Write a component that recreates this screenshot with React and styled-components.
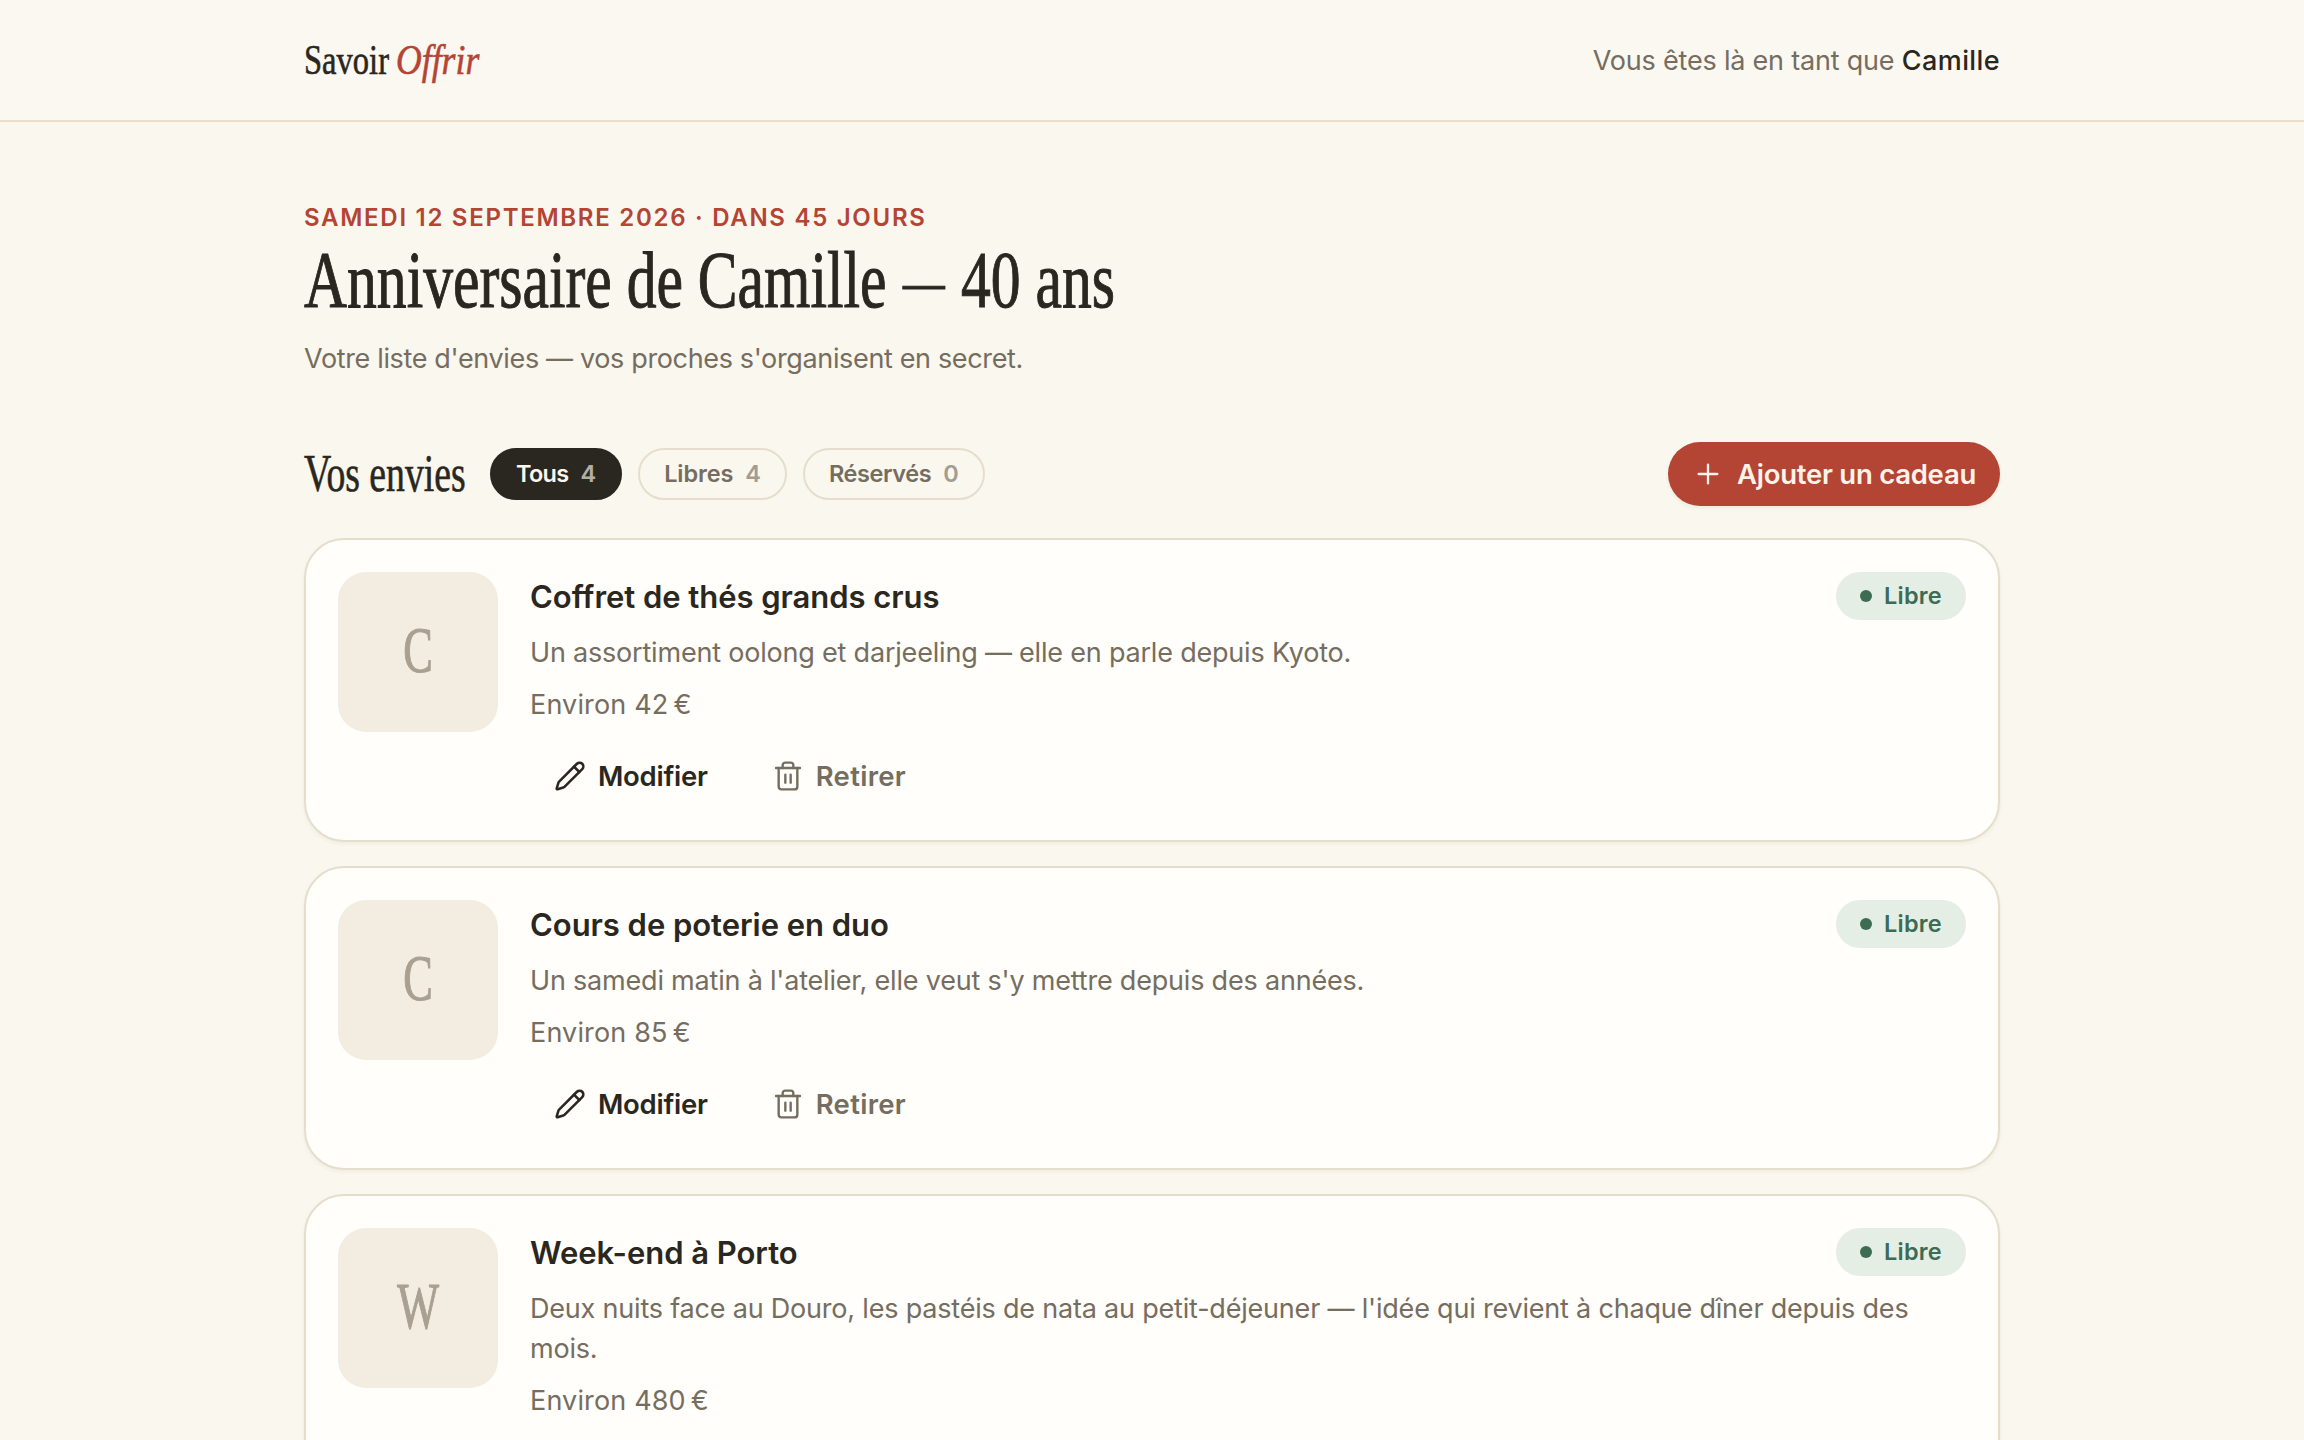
import React from "react";
import styled, { createGlobalStyle, ThemeProvider } from "styled-components";
import { Pencil, Plus, Trash2 } from "lucide-react";

const theme = {
  page: "#faf7ee",
  header: "#fbf8f2",
  card: "#fffefa",
  ink: "#2a2620",
  muted: "#756d60",
  faint: "#a9a091",
  line: "#e6decd",
  headerLine: "#ebdecb",
  tile: "#f3ece1",
  red: "#b44434",
  green: "#3d6b54",
  greenSoft: "#e5eee5",
  sans: 'Inter, "Liberation Sans", sans-serif',
  serif: '"Liberation Serif", serif',
};

const GlobalStyle = createGlobalStyle`
* {
box-sizing: border-box;
}

body {
margin: 0;
background: ${({theme}) => theme.page};
}

h1, h2, h3, p {
margin: 0;
font-weight: 400;
}

button {
margin: 0;
border: 0;
background: none;
font: inherit;
cursor: pointer;
}
`

const Page = styled.div`
height: 100vh;
overflow: hidden;
color: ${({theme}) => theme.ink};
font-family: ${({theme}) => theme.sans};
font-size: 27px;
line-height: 40px;
`

const Header = styled.header`
height: 122px;
border-bottom: 2px solid ${({theme}) => theme.headerLine};
background: ${({theme}) => theme.header};
`

const Container = styled.div`
width: 1696px;
margin: 0 auto;
`

const HeaderRow = styled(Container)`
display: flex;
align-items: center;
justify-content: space-between;
height: 120px;
`

// Serif text squeezed horizontally, the width is the one it takes once squeezed
const Condensed = styled.span`
display: block;
width: ${({$width}) => $width}px;
white-space: nowrap;
transform: scaleX(${({$scale}) => $scale});
transform-origin: left;
-webkit-text-stroke: ${({$stroke}) => $stroke || 0.6}px currentColor;
`

const Dash = styled.span`
position: relative;
top: -6px;
margin: 0 2px;
font-size: 56px;
line-height: 0;
`

const Logo = styled.div`
display: flex;
font-family: ${({theme}) => theme.serif};
font-size: 43px;
line-height: 48px;
`

const LogoAccent = styled(Condensed)`
color: ${({theme}) => theme.red};
font-style: italic;
`

const Identity = styled.p`
padding-top: 2px;
color: ${({theme}) => theme.muted};
letter-spacing: -0.2px;

strong {
color: ${({theme}) => theme.ink};
font-weight: 500;
letter-spacing: 0.4px;
}
`

const Main = styled(Container)`
padding-top: 80px;
`

const EventDate = styled.p`
color: ${({theme}) => theme.red};
font-size: 24px;
font-weight: 600;
line-height: 32px;
letter-spacing: 1.72px;
text-transform: uppercase;
`

const Title = styled.h1`
margin-top: 7px;
font-family: ${({theme}) => theme.serif};
font-size: 80px;
line-height: 78px;
`

const Intro = styled.p`
margin-top: 20px;
color: ${({theme}) => theme.muted};
letter-spacing: -0.35px;
`

const Toolbar = styled.div`
display: flex;
align-items: center;
height: 64px;
margin: 63px 0 32px;
`

const ListTitle = styled.h2`
margin-right: 24px;
padding-bottom: 2px;
font-family: ${({theme}) => theme.serif};
font-size: 53px;
line-height: 60px;
`

const Filters = styled.div`
display: flex;
gap: 16px;
`

const Filter = styled.button`
display: flex;
align-items: center;
gap: 12px;
height: 52px;
padding: 0 24px;
border: 2px solid ${({theme, $active}) => $active ? theme.ink : theme.line};
border-radius: 26px;
background: ${({theme, $active}) => $active ? theme.ink : "transparent"};
color: ${({theme, $active}) => $active ? theme.page : theme.muted};
font-size: 23.5px;
font-weight: 600;
letter-spacing: ${({$tracking}) => $tracking}px;
`

const Count = styled.span`
opacity: .65;
letter-spacing: 0;
`

const AddButton = styled.button`
display: flex;
align-items: center;
gap: 13px;
height: 64px;
margin-left: auto;
padding: 0 24px;
border-radius: 32px;
background: ${({theme}) => theme.red};
box-shadow: 0 2px 4px rgba(60, 40, 20, .06);
color: #fdf3e9;
font-size: 27.5px;
font-weight: 600;
letter-spacing: -0.26px;
`

const List = styled.div`
display: flex;
flex-direction: column;
gap: 24px;
`

const Card = styled.article`
display: flex;
align-items: flex-start;
gap: 32px;
padding: 32px;
border: 2px solid ${({theme}) => theme.line};
border-radius: 40px;
background: ${({theme}) => theme.card};
box-shadow: 0 2px 4px rgba(60, 40, 20, .05);
`

const Tile = styled.div`
display: flex;
flex: none;
align-items: center;
justify-content: center;
width: 160px;
height: 160px;
padding-bottom: 4px;
border-radius: 28px;
background: ${({theme}) => theme.tile};
color: ${({theme}) => theme.faint};
font-family: ${({theme}) => theme.serif};
font-size: 66px;

span {
transform: scaleX(.67);
-webkit-text-stroke: 1.2px currentColor;
}
`

const CardBody = styled.div`
flex: 1;
`

const CardHead = styled.div`
display: flex;
align-items: flex-start;
justify-content: space-between;
height: 49px;
`

const GiftName = styled.h3`
font-size: 31px;
font-weight: 600;
line-height: 50px;
letter-spacing: -0.04px;
`

const Badge = styled.span`
display: flex;
align-items: center;
gap: 12px;
height: 48px;
padding: 0 24px;
border-radius: 24px;
background: ${({theme}) => theme.greenSoft};
color: ${({theme}) => theme.green};
font-size: 23.5px;
font-weight: 600;
letter-spacing: 0.25px;

&::before {
width: 12px;
height: 12px;
border-radius: 50%;
background: currentColor;
content: "";
}
`

const Detail = styled.p`
margin-top: 12px;
color: ${({theme}) => theme.muted};
letter-spacing: -0.2px;
`

const Price = styled(Detail)`
letter-spacing: 0.15px;
`

const Actions = styled.div`
display: flex;
gap: 16px;
margin-top: 19px;
`

const Action = styled.button`
display: flex;
align-items: center;
gap: 12px;
height: 64px;
padding: 0 24px;
color: ${({theme, $quiet}) => $quiet ? theme.muted : theme.ink};
font-size: 27.5px;
font-weight: 600;
letter-spacing: ${({$quiet}) => $quiet ? 0.3 : -0.25}px;
`

const filters = [
  {label: "Tous", count: 4, tracking: -0.7},
  {label: "Libres", count: 4, tracking: -0.1},
  {label: "Réservés", count: 0, tracking: -0.4},
]

const gifts = [
  {
    name: "Coffret de thés grands crus",
    text: "Un assortiment oolong et darjeeling — elle en parle depuis Kyoto.",
    price: 42,
  },
  {
    name: "Cours de poterie en duo",
    text: "Un samedi matin à l'atelier, elle veut s'y mettre depuis des années.",
    price: 85,
  },
  {
    name: "Week-end à Porto",
    text: "Deux nuits face au Douro, les pastéis de nata au petit-déjeuner — l'idée qui revient à chaque dîner depuis des mois.",
    price: 480,
  },
]

const Gift = ({name, text, price}) => (
  <Card>
    <Tile><span>{name[0]}</span></Tile>
    <CardBody>
      <CardHead>
        <GiftName>{name}</GiftName>
        <Badge>Libre</Badge>
      </CardHead>
      <Detail>{text}</Detail>
      <Price>Environ {price}{"\u202f"}€</Price>
      <Actions>
        <Action><Pencil size={32} strokeWidth={1.9}/> Modifier</Action>
        <Action $quiet><Trash2 size={32} strokeWidth={1.8}/> Retirer</Action>
      </Actions>
    </CardBody>
  </Card>
)

export default function App() {
  return (
    <ThemeProvider theme={theme}>
      <GlobalStyle/>
      <Page>
        <Header>
          <HeaderRow>
            <Logo>
              <Condensed $width={92} $scale={0.757}>Savoir</Condensed>
              <LogoAccent $width={84} $scale={0.83}>Offrir</LogoAccent>
            </Logo>
            <Identity>Vous êtes là en tant que <strong>Camille</strong></Identity>
          </HeaderRow>
        </Header>
        <Main>
          <EventDate>Samedi 12 septembre 2026 · dans 45 jours</EventDate>
          <Title>
            <Condensed $width={812} $scale={0.745} $stroke={1}>
              Anniversaire de Camille <Dash>—</Dash> 40 ans
            </Condensed>
          </Title>
          <Intro>Votre liste d'envies — vos proches s'organisent en secret.</Intro>
          <Toolbar>
            <ListTitle><Condensed $width={162} $scale={0.712}>Vos envies</Condensed></ListTitle>
            <Filters>
              {filters.map(({label, count, tracking}, i) => (
                <Filter key={label} $active={i === 0} $tracking={tracking}>
                  {label} <Count>{count}</Count>
                </Filter>
              ))}
            </Filters>
            <AddButton><Plus size={32} strokeWidth={1.75}/> Ajouter un cadeau</AddButton>
          </Toolbar>
          <List>
            {gifts.map(gift => <Gift key={gift.name} {...gift}/>)}
          </List>
        </Main>
      </Page>
    </ThemeProvider>
  )
}
